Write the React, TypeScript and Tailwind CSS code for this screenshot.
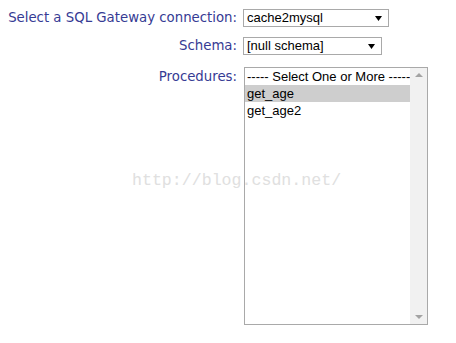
import React from "react";

const label = "text-right text-[13.3px] leading-[18px] text-[#363b94] [font-family:'DejaVu_Sans',Verdana,sans-serif]";

function Arrow() {
  return (
    <svg width="7" height="5" viewBox="0 0 7 5" className="block">
      <path d="M0 0 H7 L3.5 5 Z" fill="#000" />
    </svg>
  );
}

export default function App() {
  return (
    <div className="relative w-[456px] h-[343px] bg-white [font-family:'Liberation_Sans',Arial,sans-serif]">
      <div className="grid grid-cols-[237px_auto] gap-x-[6px] pt-[9px]">
        <div className={label}>Select a SQL Gateway connection:</div>
        <div className="flex items-center justify-between w-[146px] h-[18px] border border-[#a9a9a9] pl-[3px] pr-[6px] text-[13px] text-black">
          <span>cache2mysql</span>
          <Arrow />
        </div>

        <div className={label + " mt-[10px]"}>Schema:</div>
        <div className="mt-[10px] flex items-center justify-between w-[139px] h-[18px] border border-[#a9a9a9] pl-[3px] pr-[6px] text-[13px] text-black">
          <span>[null schema]</span>
          <Arrow />
        </div>

        <div className={label + " mt-[12px] pt-[1px]"}>Procedures:</div>
        <div className="mt-[12px] ml-[1px] flex w-[184px] h-[258px] border border-[#a9a9a9] text-[13px] text-black">
          <div className="flex-1 flex flex-col">
            <div className="h-[17px] leading-[17px] pl-[2px] whitespace-nowrap">----- Select One or More -----</div>
            <div className="h-[17px] leading-[17px] pl-[2px] bg-[#cecece]">get_age</div>
            <div className="h-[17px] leading-[17px] pl-[2px]">get_age2</div>
          </div>
          <div className="w-[17px] bg-[#f1f1f1] flex flex-col justify-between items-center py-[5px]">
            <svg width="8" height="4" viewBox="0 0 8 4"><path d="M0 4 H8 L4 0 Z" fill="#a3a3a3" /></svg>
            <svg width="8" height="4" viewBox="0 0 8 4"><path d="M0 0 H8 L4 4 Z" fill="#a3a3a3" /></svg>
          </div>
        </div>
      </div>
      <div className="absolute left-[132px] top-[171px] text-[16.6px] leading-[20px] text-[#e0e0e0] [font-family:'Liberation_Mono',monospace] pointer-events-none">
        http://blog.csdn.net/
      </div>
    </div>
  );
}
